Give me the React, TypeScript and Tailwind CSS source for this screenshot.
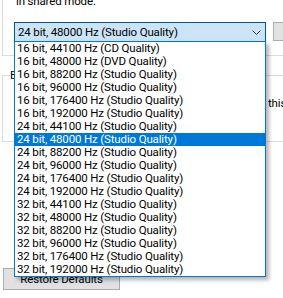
import React from "react";

const items = [
  "16 bit, 44100 Hz (CD Quality)",
  "16 bit, 48000 Hz (DVD Quality)",
  "16 bit, 88200 Hz (Studio Quality)",
  "16 bit, 96000 Hz (Studio Quality)",
  "16 bit, 176400 Hz (Studio Quality)",
  "16 bit, 192000 Hz (Studio Quality)",
  "24 bit, 44100 Hz (Studio Quality)",
  "24 bit, 48000 Hz (Studio Quality)",
  "24 bit, 88200 Hz (Studio Quality)",
  "24 bit, 96000 Hz (Studio Quality)",
  "24 bit, 176400 Hz (Studio Quality)",
  "24 bit, 192000 Hz (Studio Quality)",
  "32 bit, 44100 Hz (Studio Quality)",
  "32 bit, 48000 Hz (Studio Quality)",
  "32 bit, 88200 Hz (Studio Quality)",
  "32 bit, 96000 Hz (Studio Quality)",
  "32 bit, 176400 Hz (Studio Quality)",
  "32 bit, 192000 Hz (Studio Quality)",
];

export default function App() {
  return (
    <div className="relative w-[283px] h-[298px] overflow-hidden bg-white text-black text-[11.5px] tracking-[-0.15px] leading-[16px] font-['Segoe_UI','Roboto',sans-serif]">
      {/* Group 1 */}
      <div className="ml-[2px] mt-[-20px] w-[360px] border border-[#dcdcdc] pl-[13px] pt-[12px] pb-[13px]">
        <p className="whitespace-nowrap">in shared mode.</p>
        <div className="mt-[13px] ml-[-2px] flex gap-[7px]">
          <div className="flex h-[20px] w-[252px] shrink-0 items-center justify-between border border-[#005499] bg-[#cce4f7] pl-[3px] pr-[4px]">
            <span className="whitespace-nowrap">24 bit, 48000 Hz (Studio Quality)</span>
            <svg width="9" height="5" viewBox="0 0 9 5" className="text-[#3c3c3c]">
              <path d="M0.5 0.5 L4.5 4.5 L8.5 0.5" fill="none" stroke="currentColor" strokeWidth="1" />
            </svg>
          </div>
          <div className="h-[19px] w-[80px] shrink-0 border border-[#adadad] bg-[#e1e1e1]" />
        </div>
      </div>

      {/* Group 2 */}
      <fieldset className="mt-[11px] ml-[2px] w-[320px] border border-[#dcdcdc] pb-[30px]">
        <legend className="ml-[7px] px-0 leading-[16px]">Exclusive Mode</legend>
        <p className="mt-[12px] pl-[265px] whitespace-nowrap">this device</p>
      </fieldset>

      {/* Restore Defaults */}
      <div className="mt-[126px] ml-[3px] flex h-[22px] w-[117px] items-center justify-center border border-[#adadad] bg-[#e1e1e1]">
        Restore Defaults
      </div>

      {/* Dropdown list overlay */}
      <ul className="absolute left-[14px] top-[41px] w-[252px] border border-[#0078d7] bg-white shadow-[3px_3px_4px_rgba(0,0,0,0.3)]">
        {items.map((t, i) => (
          <li
            key={t}
            className={
              "h-[13px] pl-[2px] leading-[13px] whitespace-nowrap " +
              (i === 7 ? "bg-[#0078d7] text-white" : "")
            }
          >
            {t}
          </li>
        ))}
      </ul>
    </div>
  );
}
